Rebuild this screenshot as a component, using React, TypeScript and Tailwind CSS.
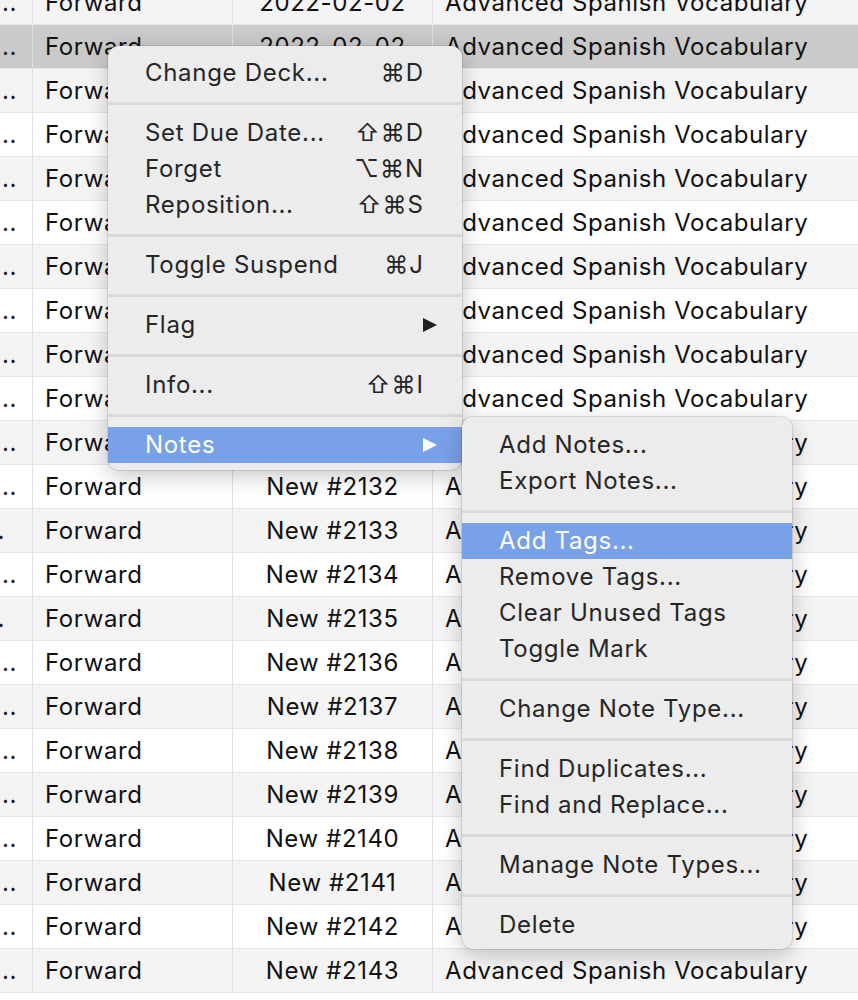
import clsx from "clsx";

const DOTS = [
  "...", "..", "..", "...", "...", "...", "...", "...", "..", "...", "..", "..",
  ".", "...", ".", "...", "...", "...", "..", "...", "...", "..", "..",
];

const rows = DOTS.map((dots, i) => ({
  dots,
  due: i < 11 ? "2022-02-02" : `New #${2121 + i}`,
  selected: i === 1,
  even: i % 2 === 0,
}));

type Entry =
  | { sep: true }
  | { sep?: false; label: string; shortcut?: string; arrow?: boolean; active?: boolean };

const mainMenu: Entry[] = [
  { label: "Change Deck...", shortcut: "⌘D" },
  { sep: true },
  { label: "Set Due Date...", shortcut: "⇧⌘D" },
  { label: "Forget", shortcut: "⌥⌘N" },
  { label: "Reposition...", shortcut: "⇧⌘S" },
  { sep: true },
  { label: "Toggle Suspend", shortcut: "⌘J" },
  { sep: true },
  { label: "Flag", arrow: true },
  { sep: true },
  { label: "Info...", shortcut: "⇧⌘I" },
  { sep: true },
  { label: "Notes", arrow: true, active: true },
];

const notesMenu: Entry[] = [
  { label: "Add Notes..." },
  { label: "Export Notes..." },
  { sep: true },
  { label: "Add Tags...", active: true },
  { label: "Remove Tags..." },
  { label: "Clear Unused Tags" },
  { label: "Toggle Mark" },
  { sep: true },
  { label: "Change Note Type..." },
  { sep: true },
  { label: "Find Duplicates..." },
  { label: "Find and Replace..." },
  { sep: true },
  { label: "Manage Note Types..." },
  { sep: true },
  { label: "Delete" },
];

const MenuItems = ({ items }: { items: Entry[] }) => (
  <>
    {items.map((it, i) =>
      it.sep ? (
        <div key={i} className="flex h-[24px] items-center">
          <div className="h-[3px] w-full bg-[#d9d9d9]" />
        </div>
      ) : (
        <div
          key={i}
          className={clsx(
            "flex h-[36px] items-center pl-[37px]",
            it.active ? "bg-[#79a1e8] text-white" : "text-[#262626]"
          )}
        >
          <span className="flex-1 whitespace-nowrap tracking-[0.7px]">{it.label}</span>
          {it.shortcut && (
            <span className="pr-[38px] tracking-[1px]">{it.shortcut}</span>
          )}
          {it.arrow && (
            <svg width="16" height="16" viewBox="0 0 16 16" className="mr-[24px]">
              <polygon points="1,1 15,8 1,15" fill={it.active ? "#ffffff" : "#1f1f1f"} />
            </svg>
          )}
        </div>
      )
    )}
  </>
);

export default function App() {
  return (
    <div className="relative h-[1000px] w-[858px] overflow-hidden bg-white font-['Inter','DejaVu_Sans',sans-serif] text-[24px] text-[#111]">
      <div className="-mt-[19px]">
        {rows.map((r, i) => (
          <div
            key={i}
            className={clsx(
              "flex h-[44px] items-stretch border-b border-[#e6e6e6] tracking-[0.6px]",
              r.selected ? "bg-[#cacaca]" : r.even ? "bg-[#f4f4f4]" : "bg-white"
            )}
          >
            <div
              className={clsx(
                "flex w-[33px] shrink-0 items-center justify-end overflow-hidden border-r border-[#e0e0e0]",
                r.dots.length === 1 ? "pr-[27px]" : "pr-[15px]"
              )}
            >
              <span className="whitespace-nowrap">{r.dots}</span>
            </div>
            <div className="flex w-[200px] shrink-0 items-center border-r border-[#e0e0e0] pl-[12px]">
              Forward
            </div>
            <div className="flex w-[200px] shrink-0 items-center justify-center border-r border-[#e0e0e0]">
              {r.due}
            </div>
            <div className="flex flex-1 items-center whitespace-nowrap pl-[12px]">
              Advanced Spanish Vocabulary
            </div>
          </div>
        ))}
      </div>

      {/* context menu */}
      <div className="absolute left-[108px] top-[46px] w-[354px] rounded-[11px] bg-[#ececec] pb-[7px] pt-[9px] shadow-[0_6px_22px_rgba(0,0,0,0.22)] ring-1 ring-black/10">
        <MenuItems items={mainMenu} />
      </div>

      {/* notes submenu */}
      <div className="absolute left-[462px] top-[417px] w-[330px] rounded-[11px] bg-[#ececec] pb-[6px] pt-[10px] shadow-[0_6px_22px_rgba(0,0,0,0.22)] ring-1 ring-black/10">
        <MenuItems items={notesMenu} />
      </div>
    </div>
  );
}
